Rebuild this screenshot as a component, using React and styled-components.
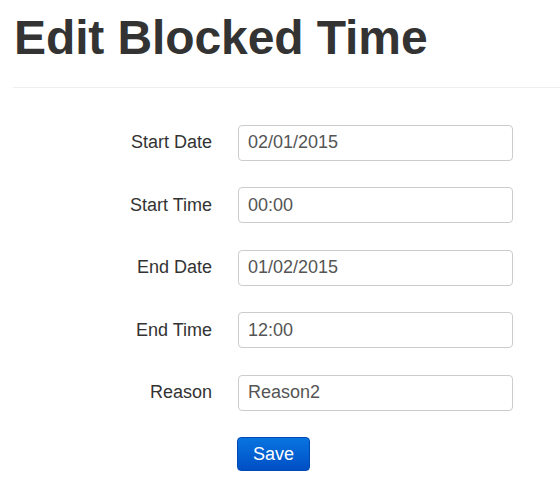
import React from 'react';
import styled, { createGlobalStyle } from 'styled-components';

const GlobalStyle = createGlobalStyle`
  body {
    margin: 0;
    background: #fff;
    font-family: "Liberation Sans", Arial, sans-serif;
    color: #333;
  }
`;

const fields = [
  { label: 'Start Date', value: '02/01/2015' },
  { label: 'Start Time', value: '00:00' },
  { label: 'End Date', value: '01/02/2015' },
  { label: 'End Time', value: '12:00' },
  { label: 'Reason', value: 'Reason2' },
];

const App = () => {
  return (
    <Page>
      <GlobalStyle />
      <Header>
        <Title>Edit Blocked Time</Title>
      </Header>
      <Form onSubmit={(e) => e.preventDefault()}>
        {fields.map((f) => (
          <React.Fragment key={f.label}>
            <Label>{f.label}</Label>
            <Input defaultValue={f.value} />
          </React.Fragment>
        ))}
        <span />
        <ButtonCell>
          <SaveButton type="submit">Save</SaveButton>
        </ButtonCell>
      </Form>
    </Page>
  );
};

export default App;

const Page = styled.div`
  padding: 12px 0 0 13px;
`;

const Header = styled.div`
  border-bottom: 1px solid #eeeeee;
  padding-bottom: 22px;
`;

const Title = styled.h1`
  margin: 0;
  padding-left: 1px;
  font-size: 48px;
  line-height: 1.1;
  font-weight: bold;
  letter-spacing: -0.1px;
  color: #333;
`;

const Form = styled.form`
  display: grid;
  grid-template-columns: 199px 275px;
  column-gap: 26px;
  row-gap: 26.5px;
  margin-top: 37px;
  align-items: center;
`;

const Label = styled.label`
  text-align: right;
  font-size: 18px;
  color: #333;
`;

const Input = styled.input`
  box-sizing: border-box;
  height: 36px;
  width: 100%;
  padding: 0 9px;
  font-family: "Liberation Sans", Arial, sans-serif;
  font-size: 18px;
  color: #555;
  background: #fff;
  border: 1px solid #cccccc;
  border-radius: 4px;
  outline: none;
`;

const ButtonCell = styled.div`
  display: flex;
`;

const SaveButton = styled.button`
  box-sizing: border-box;
  height: 34px;
  margin-left: -1px;
  padding: 0 15px;
  font-family: "Liberation Sans", Arial, sans-serif;
  font-size: 18px;
  color: #fff;
  background: linear-gradient(#0874e0, #004fc4);
  border: 1px solid #0049b3;
  border-radius: 4px;
  cursor: pointer;
`;
